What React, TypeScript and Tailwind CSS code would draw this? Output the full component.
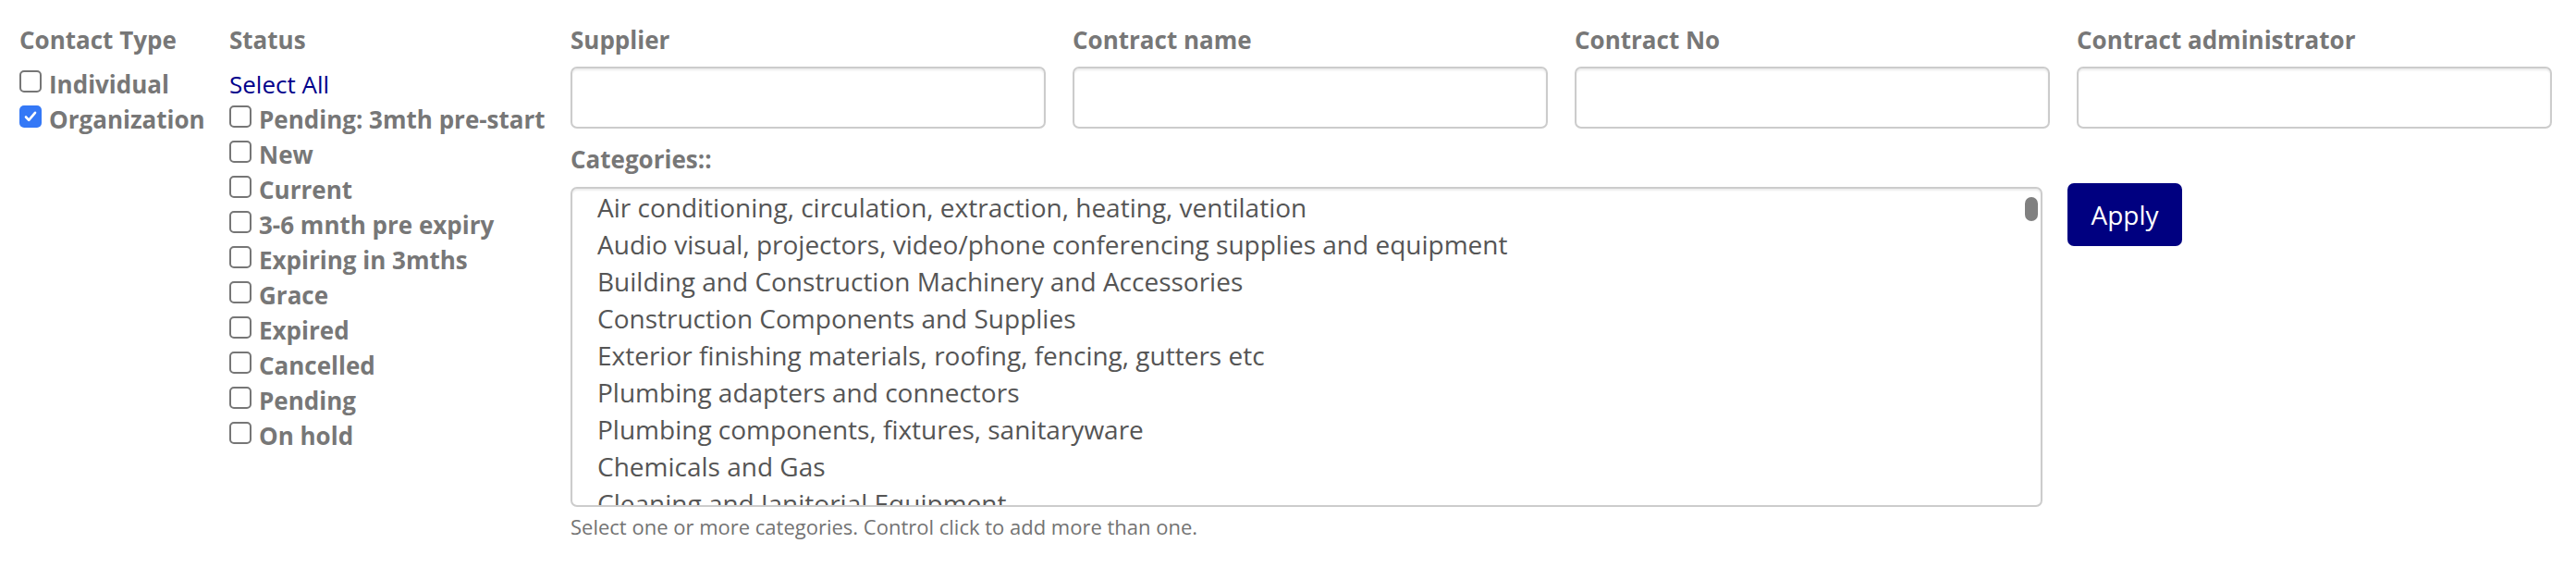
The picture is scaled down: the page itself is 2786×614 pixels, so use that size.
import React from 'react'

const statuses = [
  'Pending: 3mth pre-start',
  'New',
  'Current',
  '3-6 mnth pre expiry',
  'Expiring in 3mths',
  'Grace',
  'Expired',
  'Cancelled',
  'Pending',
  'On hold',
]

const categories = [
  'Air conditioning, circulation, extraction, heating, ventilation',
  'Audio visual, projectors, video/phone conferencing supplies and equipment',
  'Building and Construction Machinery and Accessories',
  'Construction Components and Supplies',
  'Exterior finishing materials, roofing, fencing, gutters etc',
  'Plumbing adapters and connectors',
  'Plumbing components, fixtures, sanitaryware',
  'Chemicals and Gas',
  'Cleaning and Janitorial Equipment',
]

const fields = ['Supplier', 'Contract name', 'Contract No', 'Contract administrator']

function Checkbox({ checked }: { checked?: boolean }) {
  if (checked) {
    return (
      <span className="mt-[4px] mr-[8px] flex h-[24px] w-[24px] shrink-0 items-center justify-center rounded-[5px] bg-[#3478f6]">
        <svg width="16" height="16" viewBox="0 0 16 16" fill="none">
          <path d="M3 8.5l3.2 3.3L13 3.8" stroke="white" strokeWidth="2.6" strokeLinecap="round" strokeLinejoin="round" />
        </svg>
      </span>
    )
  }
  return <span className="mt-[4px] mr-[8px] h-[24px] w-[24px] shrink-0 rounded-[5px] border-2 border-[#767676] bg-white" />
}

function CheckRow({ label, checked }: { label: string; checked?: boolean }) {
  return (
    <label className="flex items-start text-[26px] font-bold leading-[38px] text-[#777] whitespace-nowrap">
      <Checkbox checked={checked} />
      {label}
    </label>
  )
}

export default function App() {
  return (
    <div className="flex bg-white pt-[24px] pl-[21px] pr-[26px] font-['Open_Sans',sans-serif]">
      {/* Contact type */}
      <div className="w-[227px] shrink-0">
        <div className="mb-[10px] text-[26px] font-bold leading-[38px] text-[#777]">Contact Type</div>
        <CheckRow label="Individual" />
        <CheckRow label="Organization" checked />
      </div>

      {/* Status */}
      <div className="w-[369px] shrink-0">
        <div className="mb-[10px] text-[26px] font-bold leading-[38px] text-[#777]">Status</div>
        <div className="text-[26px] leading-[38px] text-[#00008b]">Select All</div>
        {statuses.map((s) => (
          <CheckRow key={s} label={s} />
        ))}
      </div>

      {/* Filters */}
      <div className="flex-1">
        <div className="grid grid-cols-4 gap-x-[29px]">
          {fields.map((f) => (
            <div key={f}>
              <div className="mb-[10px] text-[26px] font-bold leading-[38px] text-[#777]">{f}</div>
              <input
                type="text"
                className="h-[67px] w-full rounded-[7px] border-2 border-[#ccc] bg-white px-[20px] shadow-[inset_0_2px_2px_rgba(0,0,0,0.08)] outline-none"
              />
            </div>
          ))}
        </div>

        <div className="mt-[14px] flex items-start">
          <div>
            <div className="mb-[11px] text-[26px] font-bold leading-[38px] text-[#777]">Categories::</div>
            <div className="relative h-[346px] w-[1592px] overflow-hidden rounded-[7px] border-2 border-[#ccc] shadow-[inset_0_2px_2px_rgba(0,0,0,0.08)]">
              {categories.map((c) => (
                <div key={c} className="py-[3px] pl-[27px] text-[28px] leading-[34px] text-[#555] whitespace-nowrap">
                  {c}
                </div>
              ))}
              <span className="absolute top-[9px] right-[3px] h-[26px] w-[14px] rounded-full bg-[#808080]" />
            </div>
            <p className="mt-[6px] text-[22px] leading-[30px] text-[#737373]">
              Select one or more categories. Control click to add more than one.
            </p>
          </div>
          <button className="mt-[45px] ml-[27px] h-[68px] w-[124px] rounded-[7px] bg-[#000080] text-[28px] text-white">
            Apply
          </button>
        </div>
      </div>
    </div>
  )
}
